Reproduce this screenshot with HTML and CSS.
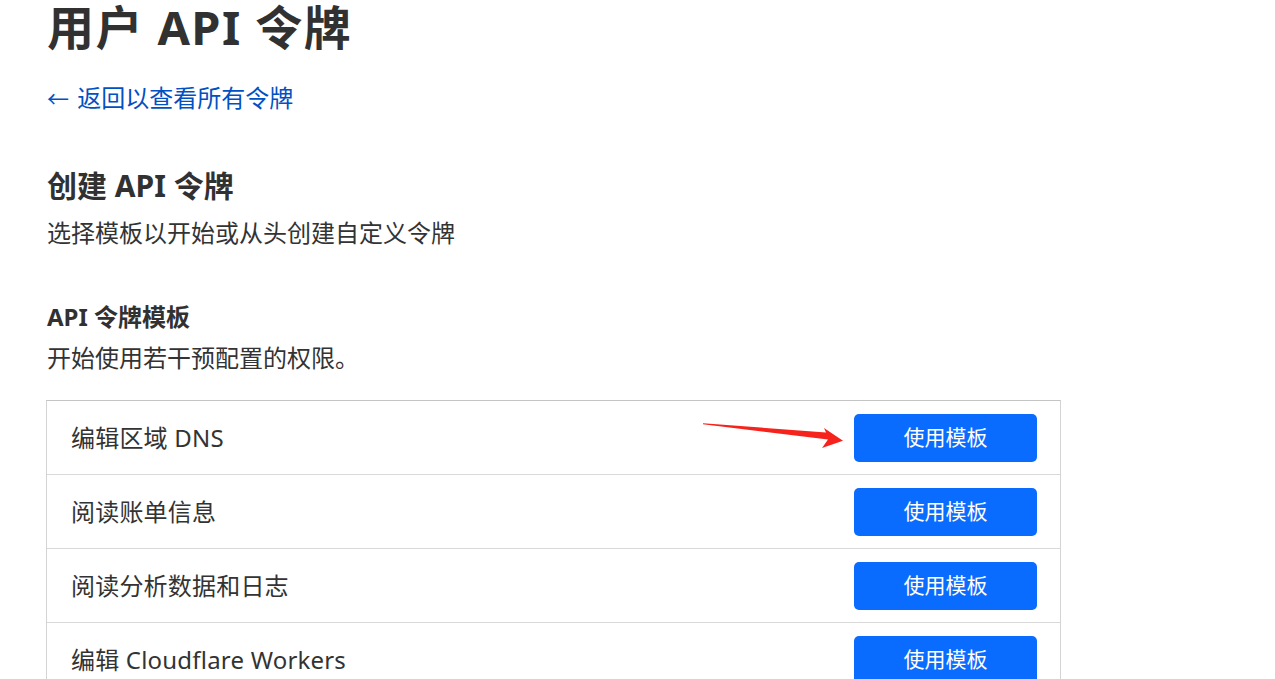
FILE: index.html
```html
<!DOCTYPE html>
<html lang="zh-CN">
<head>
<meta charset="utf-8">
<title>用户 API 令牌</title>
<link rel="stylesheet" href="styles.css">
</head>
<body>
<main class="page">
  <h1 class="title">用户 API 令牌</h1>
  <a class="back" href="#"><span class="back-arrow">←</span> 返回以查看所有令牌</a>
  <h2 class="section-title">创建 API 令牌</h2>
  <p class="section-desc">选择模板以开始或从头创建自定义令牌</p>
  <h3 class="sub-title">API 令牌模板</h3>
  <p class="sub-desc">开始使用若干预配置的权限。</p>
  <div class="templates">
    <div class="row"><span class="row-name">编辑区域 DNS</span><button class="btn">使用模板</button></div>
    <div class="row"><span class="row-name">阅读账单信息</span><button class="btn">使用模板</button></div>
    <div class="row"><span class="row-name">阅读分析数据和日志</span><button class="btn">使用模板</button></div>
    <div class="row"><span class="row-name">编辑 Cloudflare Workers</span><button class="btn">使用模板</button></div>
  </div>
</main>
<svg class="annot-arrow" width="150" height="40" viewBox="700 415 150 40" aria-hidden="true">
  <polygon points="703,423.2 826,432.6 824,428 843,440.8 822,448 828,439.4 703,424.3" fill="#f5231b"/>
</svg>
</body>
</html>
```
FILE: styles.css
```css
* { box-sizing: border-box; }
html, body { margin: 0; padding: 0; background: #ffffff; }
body {
  font-family: "Noto Sans", "Noto Sans CJK SC", sans-serif;
  color: #333333;
  overflow: hidden;
  height: 679px;
}
.page {
  padding-left: 47px;
  display: flex;
  flex-direction: column;
  align-items: flex-start;
}
.title {
  margin: 0;
  font-size: 47px;
  line-height: 54px;
  font-weight: 700;
  color: #313131;
  letter-spacing: 1.4px;
}
.back {
  margin-top: 26px;
  font-size: 24px;
  line-height: 36px;
  color: #0051c3;
  text-decoration: none;
}
.back-arrow { font-size: 22px; margin-right: 2px; }
.section-title {
  margin: 50px 0 0;
  font-size: 30px;
  line-height: 40px;
  font-weight: 700;
  color: #313131;
}
.section-desc {
  margin: 9px 0 0;
  font-size: 24px;
  line-height: 36px;
}
.sub-title {
  margin: 48px 0 0;
  font-size: 24px;
  line-height: 36px;
  font-weight: 700;
  color: #313131;
}
.sub-desc {
  margin: 5px 0 0;
  font-size: 24px;
  line-height: 36px;
}
.templates {
  margin-top: 24px;
  margin-left: -1px;
  width: 1015px;
  border: 1px solid #d4d4d4;
  border-top-color: #c4c4c4;
}
.row {
  height: 74px;
  display: flex;
  align-items: center;
  justify-content: space-between;
  padding: 0 23px 0 24px;
  border-bottom: 1px solid #d9d9d9;
}
.row-name {
  font-size: 24px;
  line-height: 36px;
  color: #333333;
  letter-spacing: 0.2px;
}
.btn {
  width: 183px;
  height: 48px;
  border: none;
  border-radius: 5px;
  background: #0a6cff;
  color: #ffffff;
  font-family: "Noto Sans", "Noto Sans CJK SC", sans-serif;
  font-size: 21px;
  line-height: 1;
  cursor: pointer;
}
.annot-arrow {
  position: absolute;
  left: 700px;
  top: 415px;
}
```
